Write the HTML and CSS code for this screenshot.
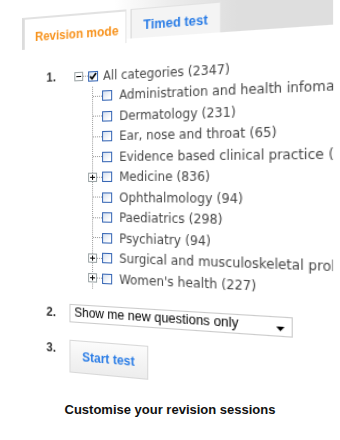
FILE: index.html
```html
<!DOCTYPE html>
<html lang="en">
<head>
    <meta charset="UTF-8">
    <title>Customise your revision sessions</title>
    <link rel="stylesheet" href="styles.css">
</head>
<body>
    <div class="shot">
        <div class="tabs">
            <div class="tab tab-active">Revision mode</div>
            <div class="tab">Timed test</div>
        </div>

        <div class="panel">
            <div class="step">
                <div class="num">1.</div>
                <div class="tree">
                    <div class="row">
                        <svg class="toggle" width="9" height="9" viewBox="0 0 9 9"><rect x="0.5" y="0.5" width="8" height="8" fill="#fff" stroke="#9aa3a5"/><path d="M2 4.5h5" stroke="#000"/></svg>
                        <span class="link short"></span>
                        <span class="check"><svg width="8" height="8" viewBox="0 0 8 8"><path d="M1 4l2 2.2L7 1" stroke="#000" stroke-width="1.8" fill="none"/></svg></span>
                        <span class="label root-label">All categories (2347)</span>
                    </div>
                    <div class="kids">
                        <div class="row"><span class="link"></span><span class="check"></span><span class="label">Administration and health infomatics (58)</span></div>
                        <div class="row"><span class="link"></span><span class="check"></span><span class="label">Dermatology (231)</span></div>
                        <div class="row"><span class="link"></span><span class="check"></span><span class="label">Ear, nose and throat (65)</span></div>
                        <div class="row"><span class="link"></span><span class="check"></span><span class="label">Evidence based clinical practice (47)</span></div>
                        <div class="row">
                            <svg class="toggle on-line" width="9" height="9" viewBox="0 0 9 9"><rect x="0.5" y="0.5" width="8" height="8" fill="#fff" stroke="#9aa3a5"/><path d="M2 4.5h5M4.5 2v5" stroke="#000"/></svg>
                            <span class="link short"></span><span class="check"></span><span class="label">Medicine (836)</span>
                        </div>
                        <div class="row"><span class="link"></span><span class="check"></span><span class="label">Ophthalmology (94)</span></div>
                        <div class="row"><span class="link"></span><span class="check"></span><span class="label">Paediatrics (298)</span></div>
                        <div class="row"><span class="link"></span><span class="check"></span><span class="label">Psychiatry (94)</span></div>
                        <div class="row">
                            <svg class="toggle on-line" width="9" height="9" viewBox="0 0 9 9"><rect x="0.5" y="0.5" width="8" height="8" fill="#fff" stroke="#9aa3a5"/><path d="M2 4.5h5M4.5 2v5" stroke="#000"/></svg>
                            <span class="link short"></span><span class="check"></span><span class="label">Surgical and musculoskeletal problems (199)</span>
                        </div>
                        <div class="row">
                            <svg class="toggle on-line" width="9" height="9" viewBox="0 0 9 9"><rect x="0.5" y="0.5" width="8" height="8" fill="#fff" stroke="#9aa3a5"/><path d="M2 4.5h5M4.5 2v5" stroke="#000"/></svg>
                            <span class="link short"></span><span class="check"></span><span class="label">Women's health (227)</span>
                        </div>
                    </div>
                </div>
            </div>

            <div class="step step-select">
                <div class="num">2.</div>
                <div class="select">
                    <span>Show me new questions only</span>
                    <svg width="7" height="4" viewBox="0 0 7 4"><path d="M0 0h7L3.5 4z" fill="#000"/></svg>
                </div>
            </div>

            <div class="step step-start">
                <div class="num">3.</div>
                <button class="start">Start test</button>
            </div>
        </div>
    </div>

    <p class="caption">Customise your revision sessions</p>
</body>
</html>
```

FILE: styles.css
```css
body {
    margin: 0;
    background: #fff;
    font-family: "Liberation Sans", Arial, sans-serif;
    color: #222;
}

/* the screenshot leans away to the left */
.shot {
    margin-left: 22px;
    width: 290px;
    height: 392px;
    overflow: hidden;
    transform-origin: 0 182px;
    transform: perspective(800px) rotateY(-22deg);
}

.tabs {
    display: flex;
    align-items: flex-end;
    height: 46px;
    background: linear-gradient(to right, #fff 0, #fff 95px, #ececec 150px, #dedede 210px);
}

.tab {
    box-sizing: border-box;
    height: 28px;
    margin-left: 4px;
    padding: 7px 11px 0 11px;
    line-height: 16px;
    font-size: 12px;
    font-weight: bold;
    color: #2b7de6;
    background: #f4f4f4;
    border-left: 1px solid #d6d6d6;
    border-top: 1px solid #e2e2e2;
    border-right: 1px solid #e6e6e6;
}

.tab-active {
    height: 32px;
    margin: 0 0 -4px 0;
    padding: 10px 7px 0 11px;
    color: #f7931e;
    background: #fff;
    border-left: 3px solid #dcdcdc;
    border-top: 2px solid #e2e2e2;
    border-right: 1px solid #e4e4e4;
}

.panel {
    padding-top: 24px;
}

.step {
    display: flex;
    align-items: flex-start;
}

.num {
    box-sizing: border-box;
    flex: none;
    width: 50px;
    padding-left: 26px;
    font-size: 12px;
    font-weight: bold;
    line-height: 19px;
    color: #333;
}

.tree {
    padding-left: 5px;
    font-family: "DejaVu Sans", Verdana, sans-serif;
    font-size: 11.4px;
    color: #484848;
    white-space: nowrap;
}

.row {
    display: flex;
    align-items: center;
    height: 19.5px;
}

.toggle {
    flex: none;
}

.toggle.on-line {
    margin-left: -5px;
}

.link {
    flex: none;
    width: 9px;
    height: 0;
    border-top: 1px dotted #9a9a9a;
}

.link.short {
    width: 5px;
}

.kids {
    margin-left: 18px;
    border-left: 1px dotted #9a9a9a;
}

.check {
    box-sizing: border-box;
    display: flex;
    align-items: center;
    justify-content: center;
    flex: none;
    width: 10px;
    height: 10px;
    border: 1px solid #3565b4;
    background: linear-gradient(135deg, #d6e0ef, #fff 80%);
}

.label {
    margin-left: 7px;
}

.root-label {
    margin-left: 5px;
}

.step-select {
    margin-top: 16px;
}

.step-select .num {
    line-height: 18px;
}

.select {
    box-sizing: border-box;
    display: flex;
    justify-content: space-between;
    align-items: flex-end;
    width: 207px;
    height: 18px;
    padding: 0 6px 4px 4px;
    border: 1px solid #cbcbcb;
    font-size: 12px;
    line-height: 14px;
    color: #000;
    background: #fff;
}

.select span {
    align-self: flex-start;
}

.step-start {
    margin-top: 17px;
}

.step-start .num {
    padding-top: 2px;
    line-height: 14px;
}

.start {
    width: 78px;
    height: 32px;
    padding: 0;
    border: 1px solid #d8d8d8;
    background: linear-gradient(to bottom, #fbfbfb, #ededed);
    font-family: "Liberation Sans", Arial, sans-serif;
    font-size: 12px;
    font-weight: bold;
    color: #2b7de6;
}

.caption {
    margin: 10px 0 0 0;
    text-align: center;
    font-size: 13px;
    font-weight: bold;
    line-height: 16px;
    color: #111;
}
```
